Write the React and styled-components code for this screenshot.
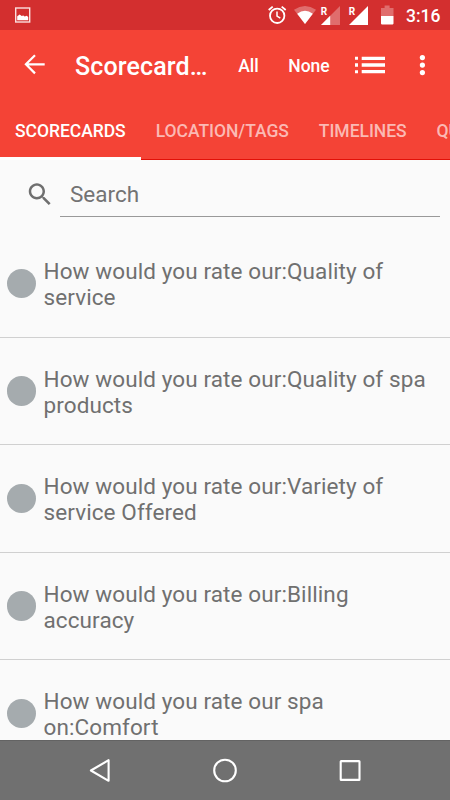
import React from "react";
import styled, { createGlobalStyle } from "styled-components";

const GlobalStyle = createGlobalStyle`
  * {
    box-sizing: border-box;
  }
  body {
    margin: 0;
    font-family: Roboto, sans-serif;
    background-color: #fafafa;
  }
`;

const Screen = styled.div`
  width: 450px;
  height: 800px;
  display: flex;
  flex-direction: column;
  overflow: hidden;
  background-color: #fafafa;
`;

const Svg = styled.svg`
  display: block;
  flex: none;
`;

const StatusBar = styled.div`
  flex: none;
  height: 30px;
  display: flex;
  justify-content: space-between;
  padding: 0 9px 0 15px;
  background-color: #d32f2f;
`;

const StatusIcons = styled.div`
  display: flex;
`;

const Clock = styled.span`
  width: 35px;
  margin-left: 11px;
  font-size: 17.5px;
  font-weight: 500;
  line-height: 32px;
  color: #fff;
  white-space: nowrap;
`;

const Toolbar = styled.header`
  flex: none;
  height: 70px;
  display: flex;
  align-items: center;
  padding-left: 20px;
  background-color: #f44336;
  color: #fff;
`;

const Title = styled.h1`
  width: 135px;
  margin: 3px 0 0 25px;
  font-size: 25px;
  font-weight: 500;
  letter-spacing: 0.12px;
  white-space: nowrap;
`;

const Action = styled.button`
  width: ${(props) => props.$width}px;
  margin: 2px 0 0;
  padding: 0;
  border: 0;
  background: none;
  font-family: inherit;
  font-size: 17.5px;
  font-weight: 500;
  text-align: center;
  color: #fff;
`;

const Tabs = styled.nav`
  flex: none;
  height: 60px;
  display: flex;
  overflow: hidden;
  background: linear-gradient(#e21008, #e21008) bottom / 100% 1px no-repeat
    #f44336;
`;

const Tab = styled.a`
  flex: none;
  height: 60px;
  padding: 2px 15px 0;
  border-bottom: 3px solid ${(props) => (props.$active ? "#fff" : "transparent")};
  font-size: 17.5px;
  font-weight: 500;
  letter-spacing: -0.04px;
  line-height: 58px;
  white-space: nowrap;
  color: ${(props) => (props.$active ? "#fff" : "#fbb9b4")};
`;

const SearchBar = styled.div`
  flex: none;
  height: 70px;
  display: flex;
  padding: 19px 10px 0 25px;
`;

const SearchField = styled.div`
  flex: 1;
  height: 38px;
  margin-left: 5px;
  padding-left: 10px;
  border-bottom: 1px solid #999;
  font-size: 22.5px;
  line-height: 31px;
  color: #737373;
`;

const List = styled.ul`
  flex: 1;
  min-height: 0;
  margin: 0;
  padding: 0;
  overflow: hidden;
  list-style: none;
`;

const Item = styled.li`
  height: 107.5px;
  display: flex;
  align-items: center;
  padding: 0 20px 0 6.5px;
  border-bottom: 1px solid #d0d0d0;
`;

const Dot = styled.span`
  flex: none;
  width: 29.5px;
  height: 29.5px;
  border-radius: 50%;
  background-color: #a5abae;
`;

const Label = styled.span`
  margin: 2.4px 0 0 7.5px;
  font-size: 22.5px;
  letter-spacing: 0.1px;
  line-height: 26.2px;
  color: #707070;
`;

const NavBar = styled.footer`
  flex: none;
  height: 60px;
  display: flex;
  justify-content: center;
  align-items: center;
  gap: 95px;
  border-top: 1px solid #636363;
  background-color: #707070;
`;

const PictureIcon = () => (
  <Svg width="16" height="30" viewBox="0 0 16 30">
    <rect x="0.7" y="8" width="14" height="14" fill="none" stroke="#fbdede" strokeWidth="1.4" />
    <path d="M2.2 20.3v-4l2.5-1.8 2 1.6 1.6-.6 1.4 1 2-.8 1.5 1.4v3.2z" fill="#fff" />
  </Svg>
);

const AlarmIcon = () => (
  <Svg width="22" height="30" viewBox="268 0 22 30">
    <g fill="none" stroke="#fff">
      <circle cx="277.2" cy="15.8" r="7.2" strokeWidth="1.8" />
      <path d="M277 11.6v4.6l3.3 2" strokeWidth="1.5" />
      <path d="M268.7 10l4-3.4M285.7 10l-4-3.4" strokeWidth="1.8" />
    </g>
  </Svg>
);

const WifiIcon = () => (
  <Svg width="27" height="30" viewBox="290 0 27 30">
    <path d="M294 9.8Q305 2.4 316 9.8L305 24z" fill="#fff" opacity="0.3" />
    <path d="M297.2 13.7Q305 7.8 312.8 13.7L305 24z" fill="#fff" />
  </Svg>
);

const SignalText = styled.text`
  font-family: Roboto, sans-serif;
  font-size: 10px;
  font-weight: 700;
  fill: #fff;
`;

const SignalIcon = ({ full = false }) => (
  <Svg width="27.5" height="30" viewBox="0 0 27.5 30">
    {full ? (
      <path d="M23 6v19H4z" fill="#fff" />
    ) : (
      <>
        <path d="M23 6v19H4z" fill="#fff" opacity="0.3" />
        <path d="M13.2 15.8V25H4z" fill="#fff" />
      </>
    )}
    <SignalText x="3.8" y="14.7">
      R
    </SignalText>
  </Svg>
);

const BatteryIcon = () => (
  <Svg width="23" height="30" viewBox="372 0 23 30">
    <path d="M381 8h3.6V5.6h5V8h3.9v8H381z" fill="#fff" opacity="0.3" />
    <path d="M381 16h12.5v7.6q0 .8-.8.8h-10.9q-.8 0-.8-.8z" fill="#fff" />
  </Svg>
);

const BackIcon = () => (
  <Svg width="30" height="30" viewBox="0 0 30 30">
    <path
      d="M24.7 14.3H6M15 5.2L5.9 14.3l9.1 9.1"
      fill="none"
      stroke="#fff"
      strokeWidth="2.2"
    />
  </Svg>
);

const ListIcon = styled(Svg)`
  margin-left: 14px;
`;

const MoreIcon = () => (
  <Svg width="55" height="70" viewBox="395 0 55 70">
    <g fill="#fff">
      <circle cx="422.4" cy="27.6" r="2.6" />
      <circle cx="422.4" cy="35.1" r="2.6" />
      <circle cx="422.4" cy="42.6" r="2.6" />
    </g>
  </Svg>
);

const SearchIcon = () => (
  <Svg width="30" height="30" viewBox="0 -0.3 24 24">
    <path
      d="M15.5 14h-.79l-.28-.27C15.41 12.59 16 11.11 16 9.5 16 5.91 13.09 3 9.5 3S3 5.91 3 9.5 5.91 16 9.5 16c1.61 0 3.09-.59 4.23-1.57l.27.28v.79l5 4.99L20.49 19l-4.99-5zm-6 0C7.01 14 5 11.99 5 9.5S7.01 5 9.5 5 14 7.01 14 9.5 11.99 14 9.5 14z"
      fill="#6f6f6f"
    />
  </Svg>
);

const NavIcon = ({ children }) => (
  <Svg
    width="30"
    height="30"
    viewBox="0 0 30 30"
    fill="none"
    stroke="#fff"
    strokeWidth="2.1"
    strokeLinejoin="round"
  >
    {children}
  </Svg>
);

const tabs = ["SCORECARDS", "LOCATION/TAGS", "TIMELINES", "QUESTIONS"];

const questions = [
  "How would you rate our:Quality of service",
  "How would you rate our:Quality of spa products",
  "How would you rate our:Variety of service Offered",
  "How would you rate our:Billing accuracy",
  "How would you rate our spa on:Comfort",
];

const App = () => (
  <>
    <GlobalStyle />
    <Screen>
      <StatusBar>
        <PictureIcon />
        <StatusIcons>
          <AlarmIcon />
          <WifiIcon />
          <SignalIcon />
          <SignalIcon full />
          <BatteryIcon />
          <Clock>3:16</Clock>
        </StatusIcons>
      </StatusBar>
      <Toolbar>
        <BackIcon />
        <Title>Scorecard…</Title>
        <Action $width={77}>All</Action>
        <Action $width={44}>None</Action>
        <ListIcon width="50" height="70" viewBox="345 0 50 70">
          <path
            d="M355 26.8h3v3h-3zM355 33.3h3v3.5h-3zM355 40.2h3v3h-3zM361.7 26.8h23.3v3.2h-23.3zM361.7 33.3h23.3v3.5h-23.3zM361.7 40h23.3v3.2h-23.3z"
            fill="#fff"
          />
        </ListIcon>
        <MoreIcon />
      </Toolbar>
      <Tabs>
        {tabs.map((tab, index) => (
          <Tab key={tab} $active={index === 0}>
            {tab}
          </Tab>
        ))}
      </Tabs>
      <SearchBar>
        <SearchIcon />
        <SearchField>Search</SearchField>
      </SearchBar>
      <List>
        {questions.map((question) => (
          <Item key={question}>
            <Dot />
            <Label>{question}</Label>
          </Item>
        ))}
      </List>
      <NavBar>
        <NavIcon>
          <path d="M5.9 14.5L23.6 4.2v20.6z" />
        </NavIcon>
        <NavIcon>
          <circle cx="15" cy="14.5" r="10.8" />
        </NavIcon>
        <NavIcon>
          <rect x="5.7" y="5.1" width="18.8" height="18.8" rx="0.5" />
        </NavIcon>
      </NavBar>
    </Screen>
  </>
);

export default App;
